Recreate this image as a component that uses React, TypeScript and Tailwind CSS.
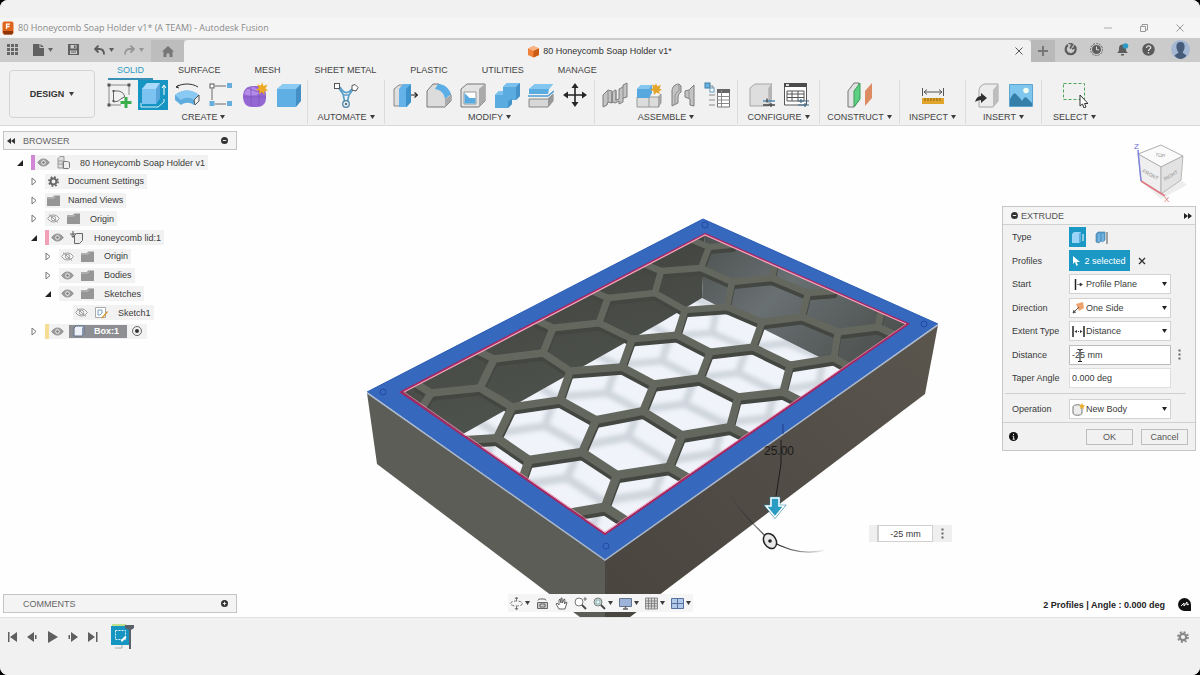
import React from 'react';
import type { ReactNode } from 'react';

type IconProps = { children: ReactNode; size?: string; box?: string };

const Icon = ({ children, size = 'w-[26px] h-[26px]', box = '0 0 26 26' }: IconProps) => (
  <svg className={`shrink-0 ${size}`} viewBox={box} fill="none" aria-hidden="true">
    {children}
  </svg>
);

const Caret = ({ color = '#3c3c3c' }: { color?: string }) => (
  <Icon size="w-[5px] h-[4px]" box="0 0 5 4">
    <path d="M0 0h5L2.500 4z" fill={color} />
  </Icon>
);

/* ---------- ribbon icons ---------- */

const SketchIcon = () => (
  <Icon>
    <path d="M3 3h20M3 3v20M3 23h12M23 3v10" stroke="#8a8a8a" />
    <path d="M7.500 19V9h5c4 1 6 3 6 6l-4 2-2 2-5 1" stroke="#666" />
    <path d="M1.500 1.500h3v3h-3zM21.500 1.500h3v3h-3zM1.500 21.500h3v3h-3zM6.500 8h2v2h-2zM6.500 18h2v2h-2z" fill="#555" />
    <path d="M18.500 15h3v4h4v3h-4v4h-3v-4h-4v-3h4z" fill="#3aae4d" />
  </Icon>
);
const ExtrudeIcon = () => (
  <Icon>
    <path d="M1 21v4h17l6-5v-3" stroke="#d8effa" />
    <path d="M2 7l5-6h13v15l-4 6H2z" fill="#7cc3f1" />
    <path d="M2 7l5-6h13l-4 6z" fill="#a9dafa" />
    <path d="M16 7l4-6v15l-4 6z" fill="#58a5dc" />
    <path d="M24 13V4M22 6l2-3 2 3" stroke="#fff" />
  </Icon>
);
const RevolveIcon = () => (
  <Icon>
    <path d="M2 5c6-4 16-4 22 0M2 5l3-2M2 5l3 1" stroke="#333" />
    <path d="M1 13c7-6 17-6 24 0v5l-5 5c-4-3-9-3-13 0l-6-5z" fill="#5facdf" />
    <path d="M1 13c7-6 17-6 24 0l-5 5c-4-3-9-3-13 0z" fill="#8ac9f2" />
    <path d="M20 18l5-5v6l-4 4z" fill="#f0f0f0" stroke="#555" />
  </Icon>
);
const PatternIcon = () => (
  <Icon>
    <path d="M7 4h11M4 7v11M7 22h11" stroke="#6a6a6a" />
    <rect x="2" y="2" width="4" height="4" fill="#fff" stroke="#555" />
    <path d="M19 1h5v5h-5zM1.500 19h5v5h-5zM19 19h5v5h-5z" fill="#68aedc" />
  </Icon>
);
const FormIcon = () => (
  <Icon>
    <path d="M1 14c0-6 4-10 10-10h5c5 0 8 4 8 9v3c0 6-4 9-9 9h-5c-6 0-9-4-9-11z" fill="#9467d2" />
    <path d="M2 12c2-5 5-7 9-7 4 1 6 3 6 7-4 2-10 2-15 0z" fill="#b58be8" />
    <path d="M9 5v19M17 8v16M1 15h23M5 6c8 3 13 5 18 4" stroke="#7f55bf" strokeWidth=".8" />
    <path d="M20 0l1.500 4 4-1.500-2 4 3 2-4 .500 0 4-2.500-3-3 2.500.500-4-4-.500 3.500-2-2-3.500 4 1z" fill="#eda922" />
  </Icon>
);
const BoxIcon = () => (
  <Icon>
    <path d="M1 7l6-5h18l-5 5v18H1z" fill="#5faee4" />
    <path d="M1 7l6-5h18l-5 5z" fill="#8bcaf2" />
    <path d="M20 7l5-5v17l-5 6z" fill="#438fc6" />
  </Icon>
);
const AutomateIcon = () => (
  <Icon>
    <path d="M5 5l5 7 2 9M21 6l-5 7-2 8M7 5c4 7 8 7 12 2M10 13h6" stroke="#5a9fc9" strokeWidth="1.700" />
    <rect x="1.500" y="1.500" width="5" height="5" fill="#fff" stroke="#555" />
    <path d="M19 3.500l3-1 3 3-2 3.500-4-1z" fill="#fff" stroke="#555" />
    <circle cx="13" cy="22" r="3.300" fill="#d9edf8" stroke="#4f7f9f" strokeWidth="1.200" />
    <circle cx="13" cy="22" r="1" fill="#444" />
  </Icon>
);
const PressPullIcon = () => (
  <Icon>
    <path d="M2 7l5-4h5v21H2z" fill="#dedede" stroke="#888" />
    <path d="M7 7l4-5h8v18l-4 5H7z" fill="#63b2e8" />
    <path d="M14 7l5-5v18l-5 5z" fill="#3d92cc" />
    <path d="M19 13h6M22.500 10.500l3 2.500-3 2.500" stroke="#222" strokeWidth="1.200" />
  </Icon>
);
const FilletIcon = () => (
  <Icon>
    <path d="M1 9l6-7h6l12 11v6l-6 6H1z" fill="#dcdcdc" stroke="#777" />
    <path d="M12 2c6 0 11 4 13 10l-6 5c-1-6-4-9-10-10z" fill="#5caee6" />
    <path d="M19 17v8l6-6v-6z" fill="#aaa" />
  </Icon>
);
const ShellIcon = () => (
  <Icon>
    <path d="M1 7l6-5h18v17l-6 6H1z" fill="#e3e3e3" stroke="#777" />
    <path d="M19 7l6-5v17l-6 6z" fill="#aaa" />
    <path d="M4 10h12v12H4z" fill="#fff" stroke="#999" />
    <path d="M4.500 11l5 5v-5l0 5h6v5.500h-11z" fill="#59aae0" />
  </Icon>
);
const CombineIcon = () => (
  <Icon>
    <path d="M9 5l4-4h13v13l-4 4h-4v4l-4 4H1V13l4-4h4z" fill="#5aabe0" />
    <path d="M9 5l4-4h13l-4 4zM1 13l4-4h4v4z" fill="#7cc0ee" />
    <path d="M22 5l4-4v13l-4 4zM14 19l4-2v5l-4 4z" fill="#4592c8" />
  </Icon>
);
const SplitIcon = () => (
  <Icon>
    <path d="M1 7l6-5h18l-4 5-1 5H1z" fill="#5aabe0" />
    <path d="M1 7l6-5h18l-4 5z" fill="#83c6f0" />
    <path d="M0 14h20l6-5" stroke="#4d9bd1" strokeWidth="1.500" />
    <path d="M1 17h19l5-5v7l-5 6H1z" fill="#d7d7d7" stroke="#888" />
    <path d="M20 17l5-5v7l-5 6z" fill="#999" />
  </Icon>
);
const MoveIcon = () => (
  <Icon>
    <path d="M13 4v18M4 13h18" stroke="#252525" strokeWidth="1.600" />
    <path d="M13 1l3.500 5h-7zM13 25l3.500-5h-7zM1 13l5-3.500v7zM25 13l-5-3.500v7z" fill="#252525" />
  </Icon>
);
const JointChainIcon = () => (
  <Icon>
    <path d="M1 13l5-5 4 1v12l-4-1-1 3-4 2zM10 12c0-2 2-4 4-4v10l3-1V7l4-2v-2l4-2v14l-4 1v4l-4 2v-3l-4 2-3-1z" fill="#c3c3c3" stroke="#7d7d7d" />
    <path d="M6 9v11M14 9v10M21 5v12" stroke="#8c8c8c" />
  </Icon>
);
const NewComponentIcon = () => (
  <Icon>
    <path d="M1 15h22v10H1z" fill="#dcdcdc" stroke="#999" />
    <path d="M13 15v10M22 16l3-4v9l-3 4" stroke="#999" fill="#aaa" />
    <path d="M1 7l4-4h11v8l-3 5H1z" fill="#56a8df" />
    <path d="M1 7l4-4h11l-3 4z" fill="#86c7ef" />
    <path d="M20 1l1.200 3.300L25 3l-1.500 3.500L26 8l-3 1 1 3-3.500-1.500L18 13l-.500-4L14 8l3-2-1-3.500 3 1z" fill="#e3a62c" />
  </Icon>
);
const JointIcon = () => (
  <Icon>
    <path d="M2 9c0-4 3-7 7-7l2 2v6c-2 1-3 3-3 6v5l-6 3z" fill="#c3c3c3" stroke="#7d7d7d" />
    <path d="M24 3v21l-4-1v-6l-5-2V9l4-1z" fill="#c3c3c3" stroke="#7d7d7d" />
    <path d="M9 2v7c-3 1-4 3-4 6v7M19 8v9" stroke="#929292" />
  </Icon>
);
const BomIcon = () => (
  <Icon>
    <rect x="1" y="1" width="5" height="5" fill="#69b1df" stroke="#3c7ea9" />
    <path d="M6 4h3v3M5 13h6M5 18h6M5 23h6" stroke="#8a8a8a" />
    <rect x="6" y="6" width="4" height="4" fill="#fff" stroke="#5f9dc5" />
    <path d="M13.500 8h12v17h-12z" fill="#fff" stroke="#777" />
    <path d="M13 7h13v4H13z" fill="#666" />
    <path d="M13 14.500h13M13 18h13M13 21.500h13M17.500 8v17" stroke="#888" />
  </Icon>
);
const ConfigureIcon = () => (
  <Icon>
    <path d="M1 6l5-4h17l-3 4v18H1z" fill="#dedede" stroke="#a5a5a5" />
    <path d="M20 6l3-4v17l-3 5z" fill="#b4b4b4" />
    <path d="M14 19h12" stroke="#3a80ad" strokeWidth="1.300" />
    <path d="M14 23h12M18 16.500v4M22 21v4" stroke="#444" strokeWidth="1.300" />
  </Icon>
);
const ConfigTableIcon = () => (
  <Icon>
    <path d="M1.500 3h22v20h-22z" fill="#fff" stroke="#555" />
    <path d="M1 1h23v4H1z" fill="#4b4b4b" />
    <path d="M4 9h17v10H4zM4 12h17M4 15.500h17M9 9v10M15 9v10" stroke="#555" />
    <path d="M3 2h3v2H3z" fill="#ddd" />
    <path d="M15 19h11M15 23h11M18 17v4M22 21v4" stroke="#3c6c8c" strokeWidth="1.200" />
  </Icon>
);
const ConstructIcon = () => (
  <Icon>
    <path d="M1 9l6-8h5v17l-5 7H1z" fill="#e3e3e3" stroke="#777" />
    <path d="M7 9l6-8v16l-6 8z" fill="#5ccf82" stroke="#399e5a" />
    <path d="M18 9l7-8v15l-7 8z" fill="#dd8b62" />
  </Icon>
);
const MeasureIcon = () => (
  <Icon>
    <path d="M2.500 6v8M23.500 6v8M4 10h18M7 7.500L4 10l3 2.500M19 7.500l3 2.500-3 2.500" stroke="#555" />
    <path d="M2 16h22v6H2z" fill="#e2a52b" />
    <path d="M5 16v3M8 16v3M11 16v3M14 16v3M17 16v3M20 16v3" stroke="#8d630d" />
  </Icon>
);
const InsertIcon = () => (
  <Icon>
    <path d="M5 9c0-4 3-7 7-7h12v17l-5 6H5z" fill="#ececec" stroke="#a5a5a5" />
    <path d="M19 8l5-6v17l-5 6z" fill="#bdbdbd" />
    <path d="M1 20c1-4 3-6 6-6v-3l6 5-6 5v-3c-3 0-4 1-6 2z" fill="#303030" />
  </Icon>
);
const DecalIcon = () => (
  <Icon>
    <path d="M1.500 2.500h23v22h-23z" fill="#7ec6ee" stroke="#5ba5ce" />
    <path d="M2 17c3-5 4-7 6-5s5 5 6 7c2-3 3-5 5-3l5 5v3H2z" fill="#357fab" />
    <circle cx="18" cy="8.500" r="2.800" fill="#f2fbef" />
  </Icon>
);
const SelectIcon = () => (
  <Icon>
    <path d="M1.500 1.500h21v16h-21z" stroke="#4fa45a" strokeDasharray="3 2" />
    <path d="M18 13v11l2.500-2 1.500 4 2-1-1.500-3.500H26z" fill="#fff" stroke="#333" />
  </Icon>
);

type Group = { name: string; width: string; icons: { label: string; icon: ReactNode; active?: boolean }[] };

const groups: Group[] = [
  {
    name: 'CREATE',
    width: 'w-[202px] pr-[6px]',
    icons: [
      { label: 'Create Sketch', icon: <SketchIcon /> },
      { label: 'Extrude', icon: <ExtrudeIcon />, active: true },
      { label: 'Revolve', icon: <RevolveIcon /> },
      { label: 'Pattern', icon: <PatternIcon /> },
      { label: 'Create Form', icon: <FormIcon /> },
      { label: 'Box', icon: <BoxIcon /> },
    ],
  },
  { name: 'AUTOMATE', width: 'w-[77px]', icons: [{ label: 'Automate', icon: <AutomateIcon /> }] },
  {
    name: 'MODIFY',
    width: 'w-[210px]',
    icons: [
      { label: 'Press Pull', icon: <PressPullIcon /> },
      { label: 'Fillet', icon: <FilletIcon /> },
      { label: 'Shell', icon: <ShellIcon /> },
      { label: 'Combine', icon: <CombineIcon /> },
      { label: 'Split Body', icon: <SplitIcon /> },
      { label: 'Move', icon: <MoveIcon /> },
    ],
  },
  {
    name: 'ASSEMBLE',
    width: 'w-[143px]',
    icons: [
      { label: 'As-built Joint', icon: <JointChainIcon /> },
      { label: 'New Component', icon: <NewComponentIcon /> },
      { label: 'Joint', icon: <JointIcon /> },
      { label: 'Bill of Materials', icon: <BomIcon /> },
    ],
  },
  {
    name: 'CONFIGURE',
    width: 'w-[82px]',
    icons: [
      { label: 'Configure', icon: <ConfigureIcon /> },
      { label: 'Configuration Table', icon: <ConfigTableIcon /> },
    ],
  },
  { name: 'CONSTRUCT', width: 'w-[80px]', icons: [{ label: 'Offset Plane', icon: <ConstructIcon /> }] },
  { name: 'INSPECT', width: 'w-[66px]', icons: [{ label: 'Measure', icon: <MeasureIcon /> }] },
  {
    name: 'INSERT',
    width: 'w-[76px]',
    icons: [
      { label: 'Insert Derive', icon: <InsertIcon /> },
      { label: 'Decal', icon: <DecalIcon /> },
    ],
  },
  { name: 'SELECT', width: 'w-[65px]', icons: [{ label: 'Select', icon: <SelectIcon /> }] },
];

const ribbonTabs = ['SOLID', 'SURFACE', 'MESH', 'SHEET METAL', 'PLASTIC', 'UTILITIES', 'MANAGE'];

/* ---------- browser tree icons ---------- */

const EyeIcon = ({ off = false }: { off?: boolean }) => (
  <Icon size="w-[13px] h-[9px]" box="0 0 13 9">
    <path
      d="M.7 4.500C2.500 1.800 4.500 1 6.500 1s4 .800 5.800 3.500C10.500 7.200 8.500 8 6.500 8s-4-.800-5.800-3.500z"
      fill={off ? '#fafafa' : '#9a9a9a'}
      stroke="#9a9a9a"
    />
    <circle cx="6.500" cy="4.500" r="2.200" fill={off ? 'none' : '#f2f2f2'} stroke={off ? '#999' : 'none'} />
    <circle cx="6.500" cy="4.500" r="1.300" fill={off ? 'none' : '#777'} />
    {off && <path d="M2 .5l9 8" stroke="#999" />}
  </Icon>
);
const FolderIcon = () => (
  <Icon size="w-[13px] h-[11px]" box="0 0 13 11">
    <path d="M0 2h6l1-1.500h6V11H0z" fill="#969696" />
    <path d="M0 3h7l1-1.500" stroke="#c4c4c4" />
  </Icon>
);
const GearIcon = ({ size = 'w-[11px] h-[11px]', color = '#666' }: { size?: string; color?: string }) => (
  <Icon size={size} box="0 0 12 12">
    <circle cx="6" cy="6" r="3.200" stroke={color} strokeWidth="2.200" />
    <circle cx="6" cy="6" r="5" stroke={color} strokeWidth="1.800" strokeDasharray="2 1.927" />
  </Icon>
);
const AssemblyIcon = () => (
  <Icon size="w-[13px] h-[13px]" box="0 0 13 13">
    <path d="M1 2.500l2-2h4v5H6V12H1z" stroke="#999" fill="#dedede" />
    <path d="M1 5h5M1 8h5" stroke="#999" />
    <path d="M6.500 5.500h4l2 1v5l-1 1h-5z" fill="#eee" stroke="#777" />
  </Icon>
);
const ComponentIcon = () => (
  <Icon size="w-[14px] h-[13px]" box="0 0 14 13">
    <path d="M4.500 4.500l2-2h6v7l-3 3h-5z" fill="#ececec" stroke="#666" />
    <path d="M3 0v6M0 3h6M1.500 4.500L3 6.500l1.500-2" stroke="#555" />
  </Icon>
);
const SketchTreeIcon = () => (
  <Icon size="w-[13px] h-[13px]" box="0 0 13 13">
    <path d="M.5 1.500h10v10H.5z" fill="#fff" stroke="#aaa" />
    <path d="M3 9V4h4v3l-2 2z" stroke="#77a3c0" />
    <path d="M7 11l5-6 1 1-5 6-1.500.500z" fill="#d9992d" />
  </Icon>
);
const BodyTreeIcon = () => (
  <Icon size="w-[13px] h-[13px]" box="0 0 13 13">
    <path d="M2 3l2-2h8v8l-2 2H2z" fill="#eef1f7" stroke="#5b6d8c" />
    <path d="M10 3l2-2v8l-2 2z" fill="#8795af" />
  </Icon>
);

type Node = {
  label: string;
  pad: string;
  state: 'open' | 'closed' | 'leaf';
  bar?: string;
  eye?: 'on' | 'off';
  icon: ReactNode;
  selected?: boolean;
};

const nodes: Node[] = [
  { label: '80 Honeycomb Soap Holder v1', pad: 'pl-[10px]', state: 'open', bar: 'bg-[#cf87d6]', eye: 'on', icon: <AssemblyIcon /> },
  { label: 'Document Settings', pad: 'pl-6', state: 'closed', icon: <GearIcon /> },
  { label: 'Named Views', pad: 'pl-6', state: 'closed', icon: <FolderIcon /> },
  { label: 'Origin', pad: 'pl-6', state: 'closed', eye: 'off', icon: <FolderIcon /> },
  { label: 'Honeycomb lid:1', pad: 'pl-6', state: 'open', bar: 'bg-[#f29fb8]', eye: 'on', icon: <ComponentIcon /> },
  { label: 'Origin', pad: 'pl-[38px]', state: 'closed', eye: 'off', icon: <FolderIcon /> },
  { label: 'Bodies', pad: 'pl-[38px]', state: 'closed', eye: 'on', icon: <FolderIcon /> },
  { label: 'Sketches', pad: 'pl-[38px]', state: 'open', eye: 'on', icon: <FolderIcon /> },
  { label: 'Sketch1', pad: 'pl-[52px]', state: 'leaf', eye: 'off', icon: <SketchTreeIcon /> },
  { label: 'Box:1', pad: 'pl-6', state: 'closed', bar: 'bg-[#f5dd94]', eye: 'on', icon: <BodyTreeIcon />, selected: true },
];

const TreeRow = ({ node }: { node: Node }) => (
  <li className={`flex h-[15px] items-center ${node.pad}`}>
    <button className="mr-1 flex w-[14px] justify-center" aria-label={`Toggle ${node.label}`}>
      {node.state === 'open' && (
        <Icon size="w-[6px] h-[6px]" box="0 0 6 6">
          <path d="M6 0v6H0z" fill="#222" />
        </Icon>
      )}
      {node.state === 'closed' && (
        <Icon size="w-[6px] h-[9px]" box="0 0 6 9">
          <path d="M1 1l4 3.500L1 8z" fill="#fff" stroke="#777" />
        </Icon>
      )}
    </button>
    <div className="flex h-full items-center bg-[#f2f2f2]">
      {node.bar && <span className={`h-full w-1 ${node.bar}`} />}
      {node.eye && (
        <button className="flex w-[17px] justify-center" aria-label={`Visibility of ${node.label}`}>
          <EyeIcon off={node.eye === 'off'} />
        </button>
      )}
      <span
        className={`flex h-[13px] items-center ${
          node.selected ? 'ml-[3px] bg-[#8d8f92] pr-2 font-bold text-white' : 'pr-[3px]'
        }`}
      >
        <span
          className={`mr-[6px] flex justify-center ${node.eye ? (node.selected ? 'w-[19px]' : 'w-[22px]') : 'w-[17px]'}`}
        >
          {node.icon}
        </span>
        {node.label}
      </span>
      {node.selected && (
        <input
          type="radio"
          defaultChecked
          aria-label="Activate Box:1"
          className="mx-[5px] h-[10px] w-[10px] appearance-none rounded-full border border-[#666] bg-[#333] bg-clip-content p-[2px]"
        />
      )}
    </div>
  </li>
);

/* ---------- model drawing ---------- */

const bars = [
  [418, 385, 431, 393], [431, 393, 422, 408], [431, 393, 480, 388], [480, 388, 494, 359],
  [494, 359, 478, 351], [494, 359, 543, 353], [480, 388, 512, 407], [543, 353, 553, 328],
  [553, 328, 536, 320], [553, 328, 599, 323], [543, 353, 570, 371], [599, 323, 608, 298],
  [608, 298, 592, 291], [608, 298, 655, 293], [599, 323, 632, 339], [655, 293, 661, 271],
  [661, 271, 644, 264], [661, 271, 701, 268], [655, 293, 685, 310], [701, 268, 709, 247],
  [709, 247, 692, 240], [709, 247, 733, 245], [701, 268, 732, 282], [732, 282, 772, 278],
  [772, 278, 775, 264], [732, 282, 727, 307], [727, 307, 685, 310], [772, 278, 808, 293],
  [808, 293, 834, 291], [808, 293, 802, 317], [802, 317, 762, 322], [802, 317, 838, 332],
  [838, 332, 878, 327], [878, 327, 881, 313], [878, 327, 893, 334], [838, 332, 834, 358],
  [834, 358, 790, 365], [834, 358, 850, 367], [727, 307, 762, 322], [762, 322, 753, 347],
  [753, 347, 710, 352], [753, 347, 790, 365], [790, 365, 783, 392], [783, 392, 738, 397],
  [783, 392, 803, 402], [738, 397, 700, 378], [738, 397, 730, 427], [730, 427, 682, 435],
  [730, 427, 750, 437], [710, 352, 677, 335], [710, 352, 700, 378], [677, 335, 685, 310],
  [677, 335, 632, 339], [700, 378, 654, 384], [654, 384, 622, 367], [654, 384, 643, 411],
  [622, 367, 632, 339], [622, 367, 570, 371], [570, 371, 560, 400], [560, 400, 512, 407],
  [560, 400, 596, 420], [596, 420, 643, 411], [596, 420, 582, 452], [643, 411, 682, 435],
  [682, 435, 669, 467], [669, 467, 617, 475], [669, 467, 692, 480], [617, 475, 582, 452],
  [617, 475, 605, 507], [605, 507, 570, 513], [605, 507, 628, 522], [582, 452, 529, 460],
  [529, 460, 497, 438], [529, 460, 522, 480], [497, 438, 512, 407], [497, 438, 464, 440],
];

// nearer bars look thicker
const thickness = (y: number) => 6 + (y - 240) / 90;

const Lattice = ({ color, dy = 0 }: { color: string; dy?: number }) => (
  <g stroke={color} strokeLinecap="round">
    {bars.map(([x1, y1, x2, y2], i) => (
      <line key={i} x1={x1} y1={y1 + dy} x2={x2} y2={y2 + dy} strokeWidth={thickness(y1)} />
    ))}
  </g>
);

const ModelView = () => (
  <svg
    className="absolute inset-0 h-full w-full"
    viewBox="0 126 1200 491"
    preserveAspectRatio="xMidYMid slice"
    role="img"
    aria-label="Soap holder box with honeycomb lid"
  >
    <defs>
      <clipPath id="opening">
        <path d="M705 234L908 324L605 534L401 392z" />
      </clipPath>
      <clipPath id="floor">
        <path d="M702 298L845 370L605 534L463 434L660 323z" />
      </clipPath>
      <linearGradient id="leftWall" x1="0" y1="0" x2=".35" y2="1">
        <stop offset="0" stopColor="#3e403b" />
        <stop offset="1" stopColor="#4f534e" />
      </linearGradient>
      <linearGradient id="rightWall" x1="0" y1="0" x2="1" y2=".7">
        <stop offset="0" stopColor="#4c504f" />
        <stop offset=".45" stopColor="#697072" />
        <stop offset="1" stopColor="#4d514f" />
      </linearGradient>
      <linearGradient id="frontRight" x1="0" y1="1" x2="1" y2="0">
        <stop offset="0" stopColor="#48443e" />
        <stop offset="1" stopColor="#5a554d" />
      </linearGradient>
      <linearGradient id="arc" x1="0" y1="0" x2="1" y2="0">
        <stop offset="0" stopColor="#222" stopOpacity="0" />
        <stop offset=".5" stopColor="#222" />
        <stop offset="1" stopColor="#222" stopOpacity="0" />
      </linearGradient>
      <filter id="soft" x="-5%" y="-5%" width="110%" height="110%">
        <feGaussianBlur stdDeviation="2" />
      </filter>
    </defs>

    <path d="M367 393L605 560V636L377 464z" fill="#5c5d56" />
    <path d="M605 560L938 325L925 394L605 636z" fill="url(#frontRight)" />
    <path d="M703 219L938 324L605 560L367 392z" fill="#3668bd" />
    <path d="M367 392L703 219L938 324" fill="none" stroke="#2b5cb4" />
    <path d="M367 393L605 560L938 325" fill="none" stroke="#a9b6c9" strokeWidth="1.500" />

    <g clipPath="url(#opening)">
      <path d="M705 234L908 324L605 534L401 392z" fill="#f0f4fa" />
      <g clipPath="url(#floor)">
        <g filter="url(#soft)" transform="translate(-15 26)" opacity=".6">
          <Lattice color="#b9c1c9" />
        </g>
      </g>
      <path d="M401 392L705 234L702 298L660 323L463 434z" fill="url(#leftWall)" />
      <path d="M705 234L908 324L845 370L702 298z" fill="url(#rightWall)" />
      <Lattice color="#444741" dy={4} />
      <Lattice color="#64675e" />
    </g>
    <path d="M705 234L908 324L605 534L401 392z" fill="none" stroke="#a8265f" strokeWidth="2" />
    <path d="M404 392L705 235L906 324" fill="none" stroke="#f3a3bd" strokeWidth="1.300" />
    <path d="M404 392L605 532L906 324" fill="none" stroke="#ee8fae" strokeWidth=".8" />

    <g fill="none" stroke="#2449a5">
      <circle cx="705" cy="225" r="3" />
      <circle cx="924" cy="324" r="3" />
      <circle cx="606" cy="546" r="3" />
      <circle cx="383" cy="392" r="3" />
    </g>

    <path d="M783 424v10" stroke="#1e3f8e" />
    <path d="M781 440v24l-5 32" stroke="#1d1d1d" fill="none" />
    <text x="764" y="455" fontSize="12" fill="#1a1a1a" fontFamily="Liberation Sans, sans-serif">25.00</text>
    <path d="M771 498h8v8h5l-9 11-9-11h5z" fill="#2a9cc4" stroke="#2583a5" strokeWidth="2.500" />
    <path d="M771 498h8v8h5l-9 11-9-11h5z" fill="#2a9cc4" stroke="#fff" strokeWidth="1.500" />
    <path d="M728 493C742 513 757 529 771 541C788 551 806 555 826 550" stroke="url(#arc)" fill="none" strokeWidth="1.300" />
    <ellipse cx="770" cy="541" rx="6" ry="8" transform="rotate(-32 770 541)" fill="#e8e8e8" stroke="#222" strokeWidth="1.500" />
    <circle cx="770" cy="541" r="1.800" fill="#222" />
  </svg>
);

const ViewCube = () => (
  <svg className="h-[66px] w-[62px]" viewBox="1130 138 62 66" role="img" aria-label="View cube">
    <path d="M1141 181l20 18 26-14-6-5z" fill="#d8d8d8" opacity=".4" />
    <path d="M1138 154l23-9 22 11-22 11z" fill="#fafafa" stroke="#999" strokeWidth=".8" />
    <path d="M1138 154l23 13v27l-20-13z" fill="#efefef" stroke="#aaa" strokeWidth=".8" />
    <path d="M1161 167l22-11-2 24-20 14z" fill="#e2e2e2" stroke="#aaa" strokeWidth=".8" />
    <path d="M1138 150l3 31" stroke="#8186dd" strokeWidth="1.500" />
    <path d="M1141 181l24 15" stroke="#e07680" strokeWidth="1.500" />
    <g fontFamily="Liberation Sans, sans-serif" fontSize="5" fill="#8b8b8b">
      <text x="1155" y="157" transform="rotate(12 1160 156)">TOP</text>
      <text x="1142" y="172" transform="rotate(28 1142 172)">FRONT</text>
      <text x="1165" y="181" transform="rotate(-31 1165 181)">RIGHT</text>
      <text x="1134" y="149" fontSize="8" fill="#6c6fd0">Z</text>
      <text x="1164" y="202" fontSize="8" fill="#e07680">X</text>
    </g>
  </svg>
);

/* ---------- extrude panel ---------- */

type FieldProps = { id: string; label: string; value: string; icon: ReactNode };

const SelectField = ({ id, label, value, icon }: FieldProps) => (
  <div className="flex h-5 items-center">
    <label htmlFor={id} className="w-[57px]">{label}</label>
    <div className="flex h-5 w-[102px] items-center border border-[#d2d2d2] bg-white pl-[2px] pr-[3px]">
      {icon}
      <select id={id} className="h-full min-w-0 flex-1 appearance-none pl-px outline-none">
        <option>{value}</option>
      </select>
      <Caret color="#222" />
    </div>
  </div>
);

const Dots = () => (
  <Icon size="w-[3px] h-[11px]" box="0 0 3 11">
    <path d="M.5 .5h2v2h-2zM.5 4.500h2v2h-2zM.5 8.500h2v2h-2z" fill="#666" />
  </Icon>
);

const small = 'w-[13px] h-[13px]';

const ExtrudePanel = () => (
  <section className="border border-[#c6c6c6] bg-[#f1f1f1]">
    <header className="flex h-[18px] items-center border-b border-[#d0d0d0] bg-[#f5f5f5] pl-2 pr-[3px]">
      <Icon size="w-[7px] h-[7px]" box="0 0 8 8">
        <circle cx="4" cy="4" r="4" fill="#333" />
        <path d="M2 4h4" stroke="#fff" />
      </Icon>
      <h2 className="ml-[3px] flex-1 text-[#555]">EXTRUDE</h2>
      <button aria-label="Dock panel">
        <Icon size="w-[8px] h-[6px]" box="0 0 8 6">
          <path d="M0 0l4 3-4 3zM4 0l4 3-4 3z" fill="#222" />
        </Icon>
      </button>
    </header>
    <div className="flex h-[163px] flex-col justify-between pl-[9px] pt-[2px]">
      <div className="flex h-5 items-center">
        <span className="w-[57px]">Type</span>
        <button aria-label="Extrude" className="flex h-5 w-[17px] items-center justify-center bg-[#1b98c4]">
          <Icon size={small} box="0 0 13 13">
            <path d="M1 3l2-2h7v9l-2 2H1z" fill="#9ad4f7" />
            <path d="M8 3l2-2v9l-2 2z" fill="#5facdf" />
            <path d="M12 10V3" stroke="#fff" />
          </Icon>
        </button>
        <button aria-label="Thin extrude" className="ml-2 flex h-5 w-[14px] items-center justify-center">
          <Icon size={small} box="0 0 13 13">
            <path d="M1 3l2-2h7v8l-2 2-2-1-2 2-3-1z" fill="#5a9fd0" stroke="#3e78a0" strokeWidth=".6" />
            <path d="M4 3v8M8 3v8" stroke="#8cc6ec" />
            <path d="M12 13V1" stroke="#555" />
          </Icon>
        </button>
      </div>
      <div className="flex h-5 items-center">
        <span className="w-[57px]">Profiles</span>
        <button className="flex h-[21px] w-[61px] items-center justify-center gap-1 bg-[#1b98c4] text-white">
          <Icon size="w-[7px] h-[10px]" box="0 0 7 10">
            <path d="M0 0v8l2-2 1.500 4 1.500-1-1.500-3H7z" fill="#fff" />
          </Icon>
          2 selected
        </button>
        <button aria-label="Clear selection" className="ml-[8px]">
          <Icon size="w-[8px] h-[8px]" box="0 0 8 8">
            <path d="M1 1l6 6M7 1L1 7" stroke="#333" strokeWidth="1.400" />
          </Icon>
        </button>
      </div>
      <SelectField
        id="start"
        label="Start"
        value="Profile Plane"
        icon={
          <Icon size={small} box="0 0 13 13">
            <path d="M3.500 1v11" stroke="#222" strokeWidth="1.500" />
            <path d="M5 6.500h3M8 5l2.500 1.500L8 8z" stroke="#333" strokeWidth=".6" fill="#333" />
          </Icon>
        }
      />
      <SelectField
        id="direction"
        label="Direction"
        value="One Side"
        icon={
          <Icon size={small} box="0 0 13 13">
            <path d="M4 3l7-2 1 6-5 3z" fill="#eda36d" />
            <path d="M1 12l6-6M1 12l1-3M1 12l3-1" stroke="#555" />
          </Icon>
        }
      />
      <SelectField
        id="extent"
        label="Extent Type"
        value="Distance"
        icon={
          <Icon size={small} box="0 0 13 13">
            <path d="M1 1v11M12 1v11" stroke="#222" strokeWidth="1.500" />
            <path d="M4 6.500h5" stroke="#333" strokeDasharray="1 1" />
            <path d="M2.500 6.500L5 5v3zM10.500 6.500L8 5v3z" fill="#333" />
          </Icon>
        }
      />
      <div className="flex h-5 items-center">
        <label htmlFor="distance" className="w-[57px]">Distance</label>
        <div className="relative">
          <input id="distance" defaultValue="-25 mm" className="block h-5 w-[102px] border border-[#bcbcbc] bg-white px-[2px] outline-none" />
          <svg className="absolute left-2 top-1 h-[13px] w-[6px]" viewBox="0 0 6 13" fill="none">
            <path d="M.5 .5h2l.5 1 .5-1h2M3 1v11M1 12.500h4" stroke="#222" />
          </svg>
        </div>
        <button aria-label="Distance options" className="ml-[7px]"><Dots /></button>
      </div>
      <div className="flex h-5 items-center">
        <label htmlFor="taper" className="w-[57px]">Taper Angle</label>
        <input id="taper" defaultValue="0.000 deg" className="h-5 w-[102px] border border-[#dedede] bg-white px-[2px] outline-none" />
      </div>
    </div>
    <div className="ml-[2px] mr-[9px] mt-[5px] border-t border-[#d0d0d0] pb-[3px] pl-[7px] pt-[5px]">
      <SelectField
        id="operation"
        label="Operation"
        value="New Body"
        icon={
          <Icon size={small} box="0 0 13 13">
            <path d="M1 4c0-3 9-3 9 0v6c0 3-9 3-9 0z" fill="#ededed" stroke="#777" />
            <path d="M10 0l1 2 2 .5-1.500 1.500.500 2-2-1-2 1 .500-2L7 2.500 9 2z" fill="#edae2c" />
          </Icon>
        }
      />
    </div>
    <footer className="flex h-7 items-center border-t border-[#d0d0d0] pl-[6px] pr-[7px]">
      <Icon size="w-[9px] h-[9px]" box="0 0 10 10">
        <circle cx="5" cy="5" r="5" fill="#111" />
        <path d="M5 2v1.500M4 4.800h1.200v3M4 8h2.500" stroke="#fff" />
      </Icon>
      <button className="ml-auto h-4 w-[47px] border border-[#bdbdbd] text-[#555]">OK</button>
      <button className="ml-2 h-4 w-[47px] border border-[#bdbdbd] text-[#555]">Cancel</button>
    </footer>
  </section>
);

/* ---------- bottom navigation bar ---------- */

const navTools = [
  {
    label: 'Orbit',
    menu: true,
    icon: (
      <Icon size={small} box="0 0 13 13">
        <ellipse cx="6.500" cy="6.500" rx="6" ry="2.500" stroke="#777" strokeDasharray="3 1.500" />
        <path d="M6.500 0v4M6.500 9v4M5 2l1.500-2L8 2M5 11l1.500 2L8 11" stroke="#777" />
      </Icon>
    ),
  },
  {
    label: 'Look At',
    icon: (
      <Icon size={small} box="0 0 13 13">
        <path d="M1.500 5.500h10v6h-10z" fill="#ccc" stroke="#666" />
        <path d="M2 3.500l1-1.500h6l1 1.500M4 7h5v3H4z" stroke="#666" />
      </Icon>
    ),
  },
  {
    label: 'Pan',
    icon: (
      <Icon size={small} box="0 0 13 13">
        <path d="M4 12L1 7l1-1 2 2V3l1-1 1 4V1h1l.5 5L9 2l1 .5L9.500 7 11 5l1 .5L10 12z" fill="#fff" stroke="#555" strokeWidth=".9" />
      </Icon>
    ),
  },
  {
    label: 'Zoom',
    icon: (
      <Icon size={small} box="0 0 13 13">
        <circle cx="5" cy="5" r="4" fill="#fff" stroke="#777" />
        <path d="M8 8l4 4" stroke="#444" strokeWidth="1.800" />
        <path d="M11 0v4M9.500 2h3.500" stroke="#555" strokeWidth=".8" />
      </Icon>
    ),
  },
  {
    label: 'Fit',
    menu: true,
    icon: (
      <Icon size={small} box="0 0 13 13">
        <circle cx="5" cy="5" r="4" fill="#e4f0ec" stroke="#777" />
        <path d="M8 8l4 4" stroke="#444" strokeWidth="1.800" />
        <path d="M3 3h4v4H3z" stroke="#6c9ea5" strokeWidth=".8" />
      </Icon>
    ),
  },
  {
    label: 'Display Settings',
    menu: true,
    icon: (
      <Icon size={small} box="0 0 13 13">
        <path d="M.5 1.500h12v8H.5z" fill="#9db4da" stroke="#66758f" />
        <path d="M4 12h5M6.500 9v3" stroke="#666" strokeWidth="1.500" />
      </Icon>
    ),
  },
  {
    label: 'Grid and Snaps',
    menu: true,
    icon: (
      <Icon size={small} box="0 0 13 13">
        <path d="M.5 1h12v11H.5zM3.500 1v11M6.500 1v11M9.500 1v11M.5 4h12M.5 6.500h12M.5 9h12" fill="#d8d8d8" stroke="#777" strokeWidth=".8" />
      </Icon>
    ),
  },
  {
    label: 'Viewports',
    menu: true,
    icon: (
      <Icon size={small} box="0 0 13 13">
        <path d="M.5 1.500h12v10H.5zM6.500 1.500v10M.5 6.500h12" fill="#b3c9e9" stroke="#55719c" />
      </Icon>
    ),
  },
];

const playback = [
  { label: 'Go to start', d: 'M1 1v10h1.500V1zM10 1v10L3 6z' },
  { label: 'Step back', d: 'M7 1v10L0 6zM8 4h1.500v4H8z' },
  { label: 'Play', d: 'M1 0l10 6-10 6z' },
  { label: 'Step forward', d: 'M4 1v10l7-5zM1.500 4H3v4H1.500z' },
  { label: 'Go to end', d: 'M1 1v10l7-5zM9 1v10h1.500V1z' },
];

const TitleBar = () => (
  <div className="bg-[#f1f1f1] pt-[18px]">
    <div className="flex h-5 items-center bg-[#f5f5f5] pl-[2px] pr-4">
      <Icon size="w-[12px] h-[14px]" box="0 0 12 14">
        <rect width="11" height="13" x=".5" y=".5" rx="2" fill="#e0641c" />
        <path d="M1 10h10v2l-1 1.500H2z" fill="#8c3508" />
        <path d="M4.500 8V3.200h3.500M4.500 5.500h3" stroke="#fff" strokeWidth="1.300" />
      </Icon>
      <h1 className="ml-1 flex-1 font-['Open_Sans',sans-serif] text-[9px] text-[#8a8a8a]">
        80 Honeycomb Soap Holder v1* (A TEAM) - Autodesk Fusion
      </h1>
      <div className="flex items-center gap-7">
        <button aria-label="Minimize">
          <Icon size="w-[8px] h-[8px]" box="0 0 8 8"><path d="M0 4h8" stroke="#aaa" /></Icon>
        </button>
        <button aria-label="Restore">
          <Icon size="w-[8px] h-[8px]" box="0 0 8 8">
            <path d="M.5 2.500h5v5h-5zM2 2V.5h5.500V6H6" stroke="#999" />
          </Icon>
        </button>
        <button aria-label="Close">
          <Icon size="w-[8px] h-[8px]" box="0 0 8 8"><path d="M.5 .5l7 7M7.500 .5l-7 7" stroke="#999" /></Icon>
        </button>
      </div>
    </div>
  </div>
);

const TabBar = () => (
  <div className="flex h-6 items-end bg-[#cbcbcb] pt-[2px]">
    <div className="flex h-full w-[151px] items-center pb-[3px] pl-[7px]">
      <button aria-label="Data panel">
        <Icon size="w-[11px] h-[11px]" box="0 0 11 11">
          <path d="M0 0h3v3H0zM4 0h3v3H4zM8 0h3v3H8zM0 4h3v3H0zM4 4h3v3H4zM8 4h3v3H8zM0 8h3v3H0zM4 8h3v3H4zM8 8h3v3H8z" fill="#666" />
        </Icon>
      </button>
      <button aria-label="File" className="ml-[15px] flex items-center gap-1">
        <Icon size="w-[11px] h-[12px]" box="0 0 11 12">
          <path d="M0 0h6.500v4H11v8H0zM7.500 0L11 3H7.500z" fill="#616161" />
        </Icon>
        <Caret color="#666" />
      </button>
      <button aria-label="Save" className="ml-[15px]">
        <Icon size="w-[11px] h-[11px]" box="0 0 11 11">
          <path d="M0 0h11v11H0z" fill="#606060" />
          <path d="M2.500 1h6v3.500h-6zM2 6.500h7V10H2z" fill="#ccc" />
          <path d="M6 1.500h1.500V4H6zM3 7.500h5v1H3z" fill="#606060" />
        </Icon>
      </button>
      <button aria-label="Undo" className="ml-[15px] flex items-center gap-1">
        <Icon size="w-[11px] h-[10px]" box="0 0 11 10">
          <path d="M4.500 .5L1 4l3.500 3.500M1 4h4.500C8.500 4 10 6 10 9.500" stroke="#5c5c5c" strokeWidth="1.800" />
        </Icon>
        <Caret color="#5c5c5c" />
      </button>
      <button aria-label="Redo" className="ml-[10px] flex items-center gap-1">
        <Icon size="w-[11px] h-[10px]" box="0 0 11 10">
          <path d="M6.500 .5L10 4 6.500 7.500M10 4H5.500C2.500 4 1 6 1 9.500" stroke="#969696" strokeWidth="1.800" />
        </Icon>
        <Caret color="#969696" />
      </button>
    </div>
    <button aria-label="Home" className="flex h-full w-[33px] items-center justify-center bg-[#bdbdbd] pt-px">
      <Icon size="w-[12px] h-[11px]" box="0 0 12 11">
        <path d="M6 0l6 5.500h-1.500V11H7.500V7.500h-3V11h-3V5.500H0z" fill="#777" />
      </Icon>
    </button>
    <div className="flex h-full flex-1 items-center rounded-t bg-[#f1f1f1] pr-2">
      <div className="flex flex-1 items-center justify-center gap-[3px] text-[#333]">
        <Icon size="w-[13px] h-[13px]" box="0 0 13 13">
          <path d="M1 3.500L6.500 1 12 3.500V10l-5.500 2.500L1 10z" fill="#f0813a" />
          <path d="M1 3.500L6.500 1 12 3.500 6.500 6z" fill="#f9b483" />
          <path d="M6.500 6L12 3.500V10l-5.500 2.500z" fill="#cc5a17" />
        </Icon>
        80 Honeycomb Soap Holder v1*
      </div>
      <button aria-label="Close document">
        <Icon size="w-[8px] h-[8px]" box="0 0 8 8"><path d="M.5 .5l7 7M7.500 .5l-7 7" stroke="#555" /></Icon>
      </button>
    </div>
    <button aria-label="New document" className="flex h-full w-6 items-center justify-center bg-[#b9b9b9]">
      <Icon size="w-[10px] h-[10px]" box="0 0 10 10"><path d="M5 0v10M0 5h10" stroke="#777" strokeWidth="2" /></Icon>
    </button>
    <div className="flex h-full items-center gap-[13px] pb-[3px] pl-[9px] pr-[10px]">
      <button aria-label="Extensions">
        <Icon size="w-[13px] h-[13px]" box="0 0 13 13">
          <path d="M4 2a5 5 0 1 0 6 .5" stroke="#5c5c5c" strokeWidth="2.200" />
          <path d="M4.500 0l4 1.500L6 5.500M8 6l4-2" stroke="#5c5c5c" strokeWidth="1.800" />
        </Icon>
      </button>
      <button aria-label="Job status">
        <Icon size="w-[13px] h-[13px]" box="0 0 13 13">
          <circle cx="6.500" cy="6.500" r="6" stroke="#666" strokeDasharray="2 1" />
          <circle cx="6.500" cy="6.500" r="4.500" fill="#5c5c5c" />
          <path d="M6.500 3.500v3.300H9" stroke="#ddd" />
        </Icon>
      </button>
      <button aria-label="Notifications">
        <Icon size="w-[13px] h-[13px]" box="0 0 13 13">
          <path d="M1 10c2-1 2-3 2-5s1.500-3.500 3.500-3.500S10 3 10 5s0 4 2 5zM5 11h3v1.500H5z" fill="#5c5c5c" />
          <circle cx="9.500" cy="3" r="2.800" fill="#2e9bc6" />
        </Icon>
      </button>
      <button aria-label="Help">
        <Icon size="w-[13px] h-[13px]" box="0 0 13 13">
          <circle cx="6.500" cy="6.500" r="6.200" fill="#5a5a5a" />
          <path d="M4.500 5c0-3 4.200-2.500 4.200-.3C8.700 6.200 6.500 6 6.500 8M6.500 9v1.500" stroke="#ddd" strokeWidth="1.300" />
        </Icon>
      </button>
      <button aria-label="Account" className="ml-[3px]">
        <Icon size="w-[19px] h-[19px]" box="0 0 19 19">
          <circle cx="9.500" cy="9.500" r="9.500" fill="#a5b8d3" />
          <path d="M9.500 2C6 2 5 5 5.500 8c.3 2.500 1.500 3.500 2 4.500l-4 3c3 4.500 9 4.500 12 0l-4-3c.5-1 1.700-2 2-4.500C14 5 13 2 9.500 2z" fill="#475c7a" />
        </Icon>
      </button>
    </div>
  </div>
);

const Ribbon = () => (
  <div className="flex border-b border-[#d9d9d9] bg-[#f1f1f1]">
    <div className="w-[106px] pl-[9px] pt-2">
      <button className="flex h-12 w-[86px] items-center justify-center gap-[5px] rounded-sm border border-[#d4d4d4] font-bold text-[#333]">
        DESIGN <Caret />
      </button>
    </div>
    <div className="pb-px">
      <nav className="flex h-[18px] gap-4 pl-[2px]">
        {ribbonTabs.map((tab) => (
          <button
            key={tab}
            className={`border-b-2 px-[9px] pb-px ${
              tab === 'SOLID' ? 'border-[#3a8fb5] text-[#2d9ac6]' : 'border-transparent text-[#444]'
            }`}
          >
            {tab}
          </button>
        ))}
      </nav>
      <div className="flex">
        {groups.map((group) => (
          <div key={group.name} className={`${group.width} border-r border-[#dcdcdc] last:border-r-0`}>
            <div className="flex justify-center gap-1">
              {group.icons.map((item) => (
                <button
                  key={item.label}
                  aria-label={item.label}
                  className={`flex h-[30px] w-[30px] shrink-0 items-center justify-center ${item.active ? 'bg-[#1795c2]' : ''}`}
                >
                  {item.icon}
                </button>
              ))}
            </div>
            <button className="mx-auto flex h-[14px] items-center gap-[3px] text-[#444]">
              {group.name} <Caret />
            </button>
          </div>
        ))}
      </div>
    </div>
  </div>
);

const PanelBar = ({ title, sign, collapse }: { title: string; sign: string; collapse?: boolean }) => (
  <div className="flex h-[19px] w-[234px] items-center border border-[#c4c4c4] bg-[#f4f4f4] pl-[3px] pr-2 text-[#666]">
    <span className="flex w-4">
      {collapse && (
        <Icon size="w-[8px] h-[6px]" box="0 0 8 6">
          <path d="M4 0L0 3l4 3zM8 0L4 3l4 3z" fill="#333" />
        </Icon>
      )}
    </span>
    <h2 className="flex-1">{title}</h2>
    <button aria-label={`${title} options`}>
      <Icon size="w-[7px] h-[7px]" box="0 0 8 8">
        <circle cx="4" cy="4" r="4" fill="#333" />
        <path d={sign} stroke="#fff" />
      </Icon>
    </button>
  </div>
);

const Canvas = () => (
  <main className="relative flex flex-1 overflow-hidden bg-[#fefefe]">
    <ModelView />
    <div className="relative flex flex-1 items-stretch justify-between pb-1 pl-[3px] pr-1">
      <aside className="flex w-[234px] flex-col pt-[5px]">
        <PanelBar title="BROWSER" sign="M2 4h4" collapse />
        <ul className="mt-[5px] flex h-[184px] flex-col justify-between">
          {nodes.map((node, i) => (
            <TreeRow key={i} node={node} />
          ))}
        </ul>
        <div className="mt-auto">
          <PanelBar title="COMMENTS" sign="M2 4h4M4 2v4" />
        </div>
      </aside>
      <aside className="flex w-[194px] flex-col pt-3">
        <div className="mb-[2px] flex justify-end pr-1">
          <ViewCube />
        </div>
        <ExtrudePanel />
        <div className="mb-[2px] mt-auto flex items-center justify-end gap-[13px] pr-[5px] font-bold text-[#222]">
          2 Profiles | Angle : 0.000 deg
          <button aria-label="Assistant">
            <Icon size={small} box="0 0 13 13">
              <path d="M6.500 0A6.500 6.500 0 0 1 13 6.500V13H6.500a6.500 6.500 0 0 1 0-13z" fill="#111" />
              <path d="M3 8l3-3v3l3-4v3l2-1" stroke="#fff" />
            </Icon>
          </button>
        </div>
      </aside>
    </div>

    <div className="absolute left-[869px] top-[399px] flex h-[17px] items-center bg-[#efefef]">
      <span className="ml-1 h-full w-[5px] border-r border-[#ccc]" />
      <input aria-label="Distance value" defaultValue="-25 mm" className="h-full w-[55px] border border-[#d0d0d0] bg-white text-center outline-none" />
      <button aria-label="Value options" className="px-[8px]"><Dots /></button>
    </div>

    <div className="absolute inset-x-0 bottom-[5px] flex justify-center">
      <div className="flex h-[18px] items-center gap-[6px] bg-[#f5f5f5] px-[2px]">
        {navTools.map((tool) => (
          <button key={tool.label} aria-label={tool.label} className="flex items-center gap-[2px]">
            {tool.icon}
            {tool.menu && <Caret />}
          </button>
        ))}
      </div>
    </div>
  </main>
);

const Timeline = () => (
  <footer className="flex h-[58px] items-start border-t border-[#e2e2e2] bg-[#f1f1f1] pl-[7px] pr-[11px] pt-[6px]">
    <div className="flex h-[26px] items-center gap-2">
      {playback.map((item) => (
        <button key={item.label} aria-label={item.label}>
          <Icon size="w-[12px] h-[12px]" box="0 0 12 12"><path d={item.d} fill="#5f5f5f" /></Icon>
        </button>
      ))}
    </div>
    <button aria-label="Sketch feature" className="ml-3">
      <Icon size="w-[24px] h-[26px]" box="0 0 24 26">
        <path d="M1 0h14v3H1z" fill="#bfe08c" />
        <path d="M0 2h19v19H0z" fill="#1795c2" />
        <path d="M4.500 6.500h10v9h-10z" stroke="#d8effa" strokeDasharray="2 1" />
        <path d="M10 16l4-4 1.500 1.500-4 4H10z" fill="#fff" />
        <path d="M14 1h9v3l-3 2v19h-2V6l-4-2z" fill="#59616a" />
        <path d="M4 24h7v-3" stroke="#aaa" />
      </Icon>
    </button>
    <button aria-label="Timeline settings" className="ml-auto mt-[7px]">
      <GearIcon size="w-[12px] h-[12px]" color="#888" />
    </button>
  </footer>
);

export default function App() {
  return (
    <div className="min-h-screen bg-black">
      <div className="flex min-h-screen flex-col overflow-hidden rounded-lg bg-[#f1f1f1] font-['Liberation_Sans',Arial,sans-serif] text-[9px] leading-3 text-[#3a3a3a]">
        <TitleBar />
        <TabBar />
        <Ribbon />
        <Canvas />
        <Timeline />
      </div>
    </div>
  );
}
